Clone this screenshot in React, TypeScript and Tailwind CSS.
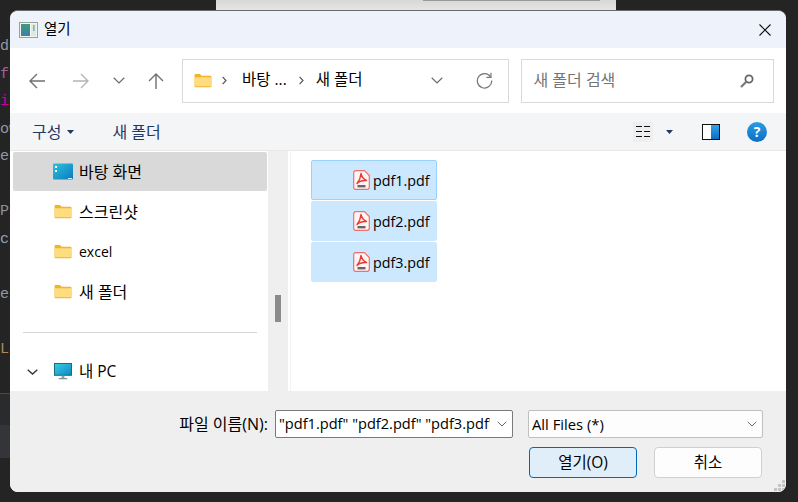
import React from "react";

const CODE: { t: string; c: string }[] = [
  { t: "de", c: "text-[#8d99a6]" },
  { t: "fi", c: "text-[#a0609a]" },
  { t: "it", c: "text-[#c800a4]" },
  { t: "ow", c: "text-[#8d99a6]" },
  { t: "et", c: "text-[#8d99a6]" },
  { t: "", c: "" },
  { t: "Pu", c: "text-[#8d8f9e]" },
  { t: "cl", c: "text-[#8fa3b8]" },
  { t: "", c: "" },
  { t: "ex", c: "text-[#8d99a6]" },
  { t: "", c: "" },
  { t: "La", c: "text-[#a98a5c]" },
];

const FONT = "font-['Open_Sans','Noto_Sans_CJK_KR',sans-serif]";

function Folder() {
  return (
    <svg width={18} height={15} viewBox="0 0 19 16" className="shrink-0">
      <path d="M0.5 2.2 C0.5 1.5 1 1 1.7 1 H6.2 L8 2.8 H17.5 C18.2 2.8 18.5 3.2 18.5 3.8 V14 C18.5 14.7 18 15.2 17.5 15.2 H1.5 C1 15.2 .5 14.7 .5 14 Z" fill="#f0b429" />
      <path d="M0.5 4.6 H18.5 V13.6 C18.5 14 18.2 14.2 17.7 14.2 H1.3 C.8 14.2 .5 14 .5 13.6 Z" fill="#fedd80" />
    </svg>
  );
}

function Desktop() {
  return (
    <svg width={20} height={17} viewBox="0 0 20 17" className="shrink-0">
      <defs>
        <linearGradient id="dsk" x1="0" y1="0" x2="1" y2="1">
          <stop offset="0" stopColor="#2cc3dc" />
          <stop offset="1" stopColor="#0d78c0" />
        </linearGradient>
      </defs>
      <rect x="0" y="0.5" width="20" height="16" rx="1" fill="url(#dsk)" />
      <rect x="2" y="3" width="2" height="2" fill="#fff" />
      <rect x="2" y="7" width="2" height="2" fill="#fff" />
      <rect x="15" y="15" width="4" height="1" fill="#cfeffa" />
    </svg>
  );
}

function Monitor() {
  return (
    <svg width={18} height={17} viewBox="0 0 19 18" className="shrink-0">
      <defs>
        <linearGradient id="mon" x1="0" y1="0" x2="1" y2="1">
          <stop offset="0" stopColor="#37d0e0" />
          <stop offset="1" stopColor="#0f86c4" />
        </linearGradient>
      </defs>
      <rect x="0.5" y="0.5" width="18" height="12.5" fill="url(#mon)" stroke="#17637f" />
      <rect x="8" y="13.5" width="3" height="2.5" fill="#8aa0ad" />
      <rect x="5" y="16" width="9" height="1.2" fill="#6f8794" />
    </svg>
  );
}

function Pdf() {
  return (
    <svg width={17} height={20} viewBox="0 0 17 20" className="shrink-0">
      <path d="M2.6 .7 H11.5 L16.3 5.5 V17 C16.3 18.4 15.5 19.3 14.2 19.3 H2.6 C1.3 19.3 .7 18.4 .7 17 V3 C.7 1.6 1.3 .7 2.6 .7 Z" fill="#fff5f4" stroke="#ee6f6b" strokeWidth="1.2" />
      <path d="M8 3.5 C8.6 6.5 10 9 13.5 10.5 C10.5 10.3 6.5 11 4 13.5 C6 11 7.7 7 8 3.5 Z" fill="none" stroke="#ea3a34" strokeWidth="1.4" strokeLinejoin="round" />
      <rect x="4.5" y="15" width="8" height="2.4" fill="#666" />
    </svg>
  );
}

function Chev({ w = 12, h = 7, color = "#6b6b6b", sw = 1.2 }: { w?: number; h?: number; color?: string; sw?: number }) {
  return (
    <svg width={w} height={h} viewBox={`0 0 ${w} ${h}`} className="shrink-0">
      <path d={`M.7 .8 L${w / 2} ${h - 1} L${w - 0.7} .8`} fill="none" stroke={color} strokeWidth={sw} />
    </svg>
  );
}

function Crumb() {
  return (
    <svg width={5} height={9} viewBox="0 0 5 9" className="shrink-0">
      <path d="M.6 .8 L4 4.5 L.6 8.2" fill="none" stroke="#555" strokeWidth="1.2" />
    </svg>
  );
}

function Arrow({ dir, color }: { dir: "l" | "r" | "u"; color: string }) {
  const d =
    dir === "l"
      ? "M16 8 H1 M8 1 L1 8 L8 15"
      : dir === "r"
        ? "M0 8 H15 M8 1 L15 8 L8 15"
        : "M8 16 V1 M1 8 L8 1 L15 8";
  return (
    <svg width={16} height={16} viewBox="0 0 16 16" className="shrink-0">
      <path d={d} fill="none" stroke={color} strokeWidth="1.4" />
    </svg>
  );
}

function Caret() {
  return (
    <svg width={7} height={4} viewBox="0 0 7 4" className="shrink-0">
      <path d="M0 0 H7 L3.5 4 Z" fill="#1f3864" />
    </svg>
  );
}

function NavItem({
  icon,
  label,
  selected,
  size = "text-[16px]",
}: {
  icon: React.ReactNode;
  label: string;
  selected?: boolean;
  size?: string;
}) {
  return (
    <div className={`flex h-[39px] w-[254px] items-center gap-[7px] rounded-[2px] pl-[41px] text-black ${size} ${selected ? "bg-[#d9d9d9]" : ""}`}>
      <span className="flex w-[18px] justify-center">{icon}</span>
      <span>{label}</span>
    </div>
  );
}

function FileItem({ name, first }: { name: string; first?: boolean }) {
  return (
    <div className={`flex h-[40px] w-[126px] items-center gap-[3px] rounded-[2px] border bg-[#cce8ff] pl-[41px] text-[14.3px] text-black ${first ? "border-[#99d1ff]" : "border-[#cce8ff]"}`}>
      <Pdf />
      <span className="pt-px">{name}</span>
    </div>
  );
}

export default function App() {
  return (
    <div className={`relative h-[502px] w-[798px] overflow-hidden bg-[#242424] ${FONT}`}>
      {/* window behind the dialog */}
      <div className="absolute left-[216px] top-0 h-[11px] w-[400px] bg-gradient-to-b from-[#d8d8d8] to-[#e6e6e6]">
        <div className="ml-[207px] h-px w-[177px] bg-[#9a9a9a]" />
      </div>
      <div className="absolute left-0 top-[393px] h-[32px] w-[10px] border-t border-[#484848] bg-[#2a2b2c]" />
      <div className="absolute left-0 top-[425px] h-[33px] w-[10px] bg-[#333538]" />

      {/* code editor text behind the dialog */}
      <div className="flex h-full w-[24px] flex-col whitespace-nowrap pt-[33px] font-['Liberation_Mono',monospace] text-[15px]">
        {CODE.map((l, i) => (
          <div key={i} className={`h-[27.5px] shrink-0 leading-[27.5px] ${l.c}`}>
            {l.t}
          </div>
        ))}
      </div>

      {/* dialog */}
      <div className="absolute left-[10px] top-[10px] flex h-[482px] w-[776px] flex-col overflow-hidden rounded-[8px] border-t border-[#6a6a6a] bg-[#efefef]">
        {/* title */}
        <div className="flex h-[37px] shrink-0 items-center bg-[#eef2fa] pl-[9px] pr-[15px]">
          <svg width={19} height={16} viewBox="0 0 19 16" className="shrink-0">
            <defs>
              <linearGradient id="ttl" x1="0" y1="0" x2="0" y2="1">
                <stop offset="0" stopColor="#3f9a7c" />
                <stop offset="1" stopColor="#3f7fa6" />
              </linearGradient>
            </defs>
            <rect x=".5" y=".5" width="18" height="15" fill="#f3f5f3" stroke="#9aa09e" />
            <rect x="2" y="2" width="9" height="12" fill="url(#ttl)" />
            <rect x="12" y="2" width="5" height="12" fill="#dfe9e4" />
            <rect x="14" y="3" width="1.6" height="6" fill="#7fb8aa" />
          </svg>
          <span className="ml-[6px] pb-px text-[14.5px] text-black">열기</span>
          <svg width={12} height={12} viewBox="0 0 12 12" className="ml-auto shrink-0">
            <path d="M0.5 .5 L11.5 11.5 M11.5 .5 L.5 11.5" stroke="#111" strokeWidth="1.1" />
          </svg>
        </div>

        {/* navigation */}
        <div className="flex h-[65px] shrink-0 items-center bg-white pl-[19px] pr-[12px]">
          <Arrow dir="l" color="#707070" />
          <span className="ml-[28px]"><Arrow dir="r" color="#b4b4b4" /></span>
          <span className="ml-[24px]"><Chev /></span>
          <span className="ml-[23px]"><Arrow dir="u" color="#707070" /></span>
          <div className="ml-[18px] flex h-[44px] w-[328px] items-center border border-[#d9d9d9] pl-[11px] pr-[15px] text-[15.5px] text-black">
            <Folder />
            <span className="ml-[10px]"><Crumb /></span>
            <span className="ml-[15px] pb-[2px]">바탕 ...</span>
            <span className="ml-[12px]"><Crumb /></span>
            <span className="ml-[12px] pb-[2px]">새 폴더</span>
            <span className="ml-auto"><Chev /></span>
            <svg width={17} height={17} viewBox="0 0 17 17" className="ml-[33px] shrink-0">
              <path d="M14.6 5 A7.2 7.2 0 1 0 15.7 8.5" fill="none" stroke="#777" strokeWidth="1.2" />
              <path d="M15 .8 V5.4 H10.4" fill="none" stroke="#777" strokeWidth="1.2" />
            </svg>
          </div>
          <div className="ml-[12px] flex h-[44px] w-[253px] items-center justify-between border border-[#d9d9d9] pl-[11px] pr-[19px] text-[16px] text-[#757575]">
            <span className="pb-[2px]">새 폴더 검색</span>
            <svg width={14} height={14} viewBox="0 0 14 14" className="shrink-0">
              <circle cx="9" cy="5" r="3.6" fill="none" stroke="#666" strokeWidth="1.8" />
              <path d="M6.3 7.8 L1 13" stroke="#777" strokeWidth="2.2" />
            </svg>
          </div>
        </div>

        {/* toolbar */}
        <div className="flex h-[38px] shrink-0 items-center border-b border-[#e8e8e8] bg-[#f4f5f7] pl-[22px] pr-[19px] text-[16px] text-[#1f3864]">
          <span>구성</span>
          <span className="ml-[6px]"><Caret /></span>
          <span className="ml-[38px]">새 폴더</span>
          <div className="ml-auto flex h-[20px] w-[20px] items-center justify-center bg-[#efefef]">
            <svg width={14} height={13} viewBox="0 0 14 13">
              <path d="M0 1.5 H6 M8 1.5 H14 M0 6.5 H6 M8 6.5 H14 M0 11.5 H6 M8 11.5 H14" stroke="#111" strokeWidth="1" />
            </svg>
          </div>
          <span className="ml-[13px]"><Caret /></span>
          <svg width={18} height={16} viewBox="0 0 18 16" className="ml-[29px] shrink-0">
            <defs>
              <linearGradient id="pane" x1="0" y1="0" x2="0" y2="1">
                <stop offset="0" stopColor="#35a3e8" />
                <stop offset="1" stopColor="#0a6fc4" />
              </linearGradient>
            </defs>
            <rect x=".5" y=".5" width="17" height="15" fill="#fff" stroke="#111" />
            <rect x="9" y="1" width="8" height="14" fill="url(#pane)" />
          </svg>
          <div className="ml-[27px] flex h-[20px] w-[20px] items-center justify-center rounded-full bg-gradient-to-b from-[#2a9be6] to-[#0b6fc2] text-[14px] font-bold leading-none text-white">
            ?
          </div>
        </div>

        {/* main area */}
        <div className="flex h-[240px] shrink-0">
          <div className="flex h-full w-[258px] shrink-0 flex-col gap-px overflow-hidden bg-white pl-[3px] pt-px">
            <NavItem selected icon={<Desktop />} label="바탕 화면" />
            <NavItem icon={<Folder />} label="스크린샷" />
            <NavItem icon={<Folder />} label="excel" size="text-[14px]" />
            <NavItem icon={<Folder />} label="새 폴더" />
            <div className="ml-[10px] mt-[20px] h-px w-[234px] shrink-0 bg-[#d6d6d6]" />
            <div className="relative mt-[18px]">
              <NavItem icon={<Monitor />} label="내 PC" size="text-[15.5px]" />
              <span className="absolute left-[14px] top-[17px]"><Chev w={11} h={6} color="#333" sw={1.4} /></span>
            </div>
          </div>
          <div className="flex h-full w-[20px] shrink-0 flex-col bg-[#efefef] pl-[7px] pt-[144px]">
            <div className="h-[27px] w-[6px] bg-[#8b8b8b]" />
          </div>
          <div className="h-full flex-1 bg-white pl-[2px]">
            <div className="flex h-full flex-col gap-px border-l border-[#f4f4f4] pl-[20px] pt-[9px]">
              <FileItem first name="pdf1.pdf" />
              <FileItem name="pdf2.pdf" />
              <FileItem name="pdf3.pdf" />
            </div>
          </div>
        </div>

        {/* footer */}
        <div className="relative flex flex-1 flex-col bg-[#efefef] pt-[19px] text-black">
          <div className="flex items-center">
            <span className="w-[258px] shrink-0 text-right text-[16px]">파일 이름(N):</span>
            <div className="ml-[7px] flex h-[28px] w-[238px] shrink-0 items-center justify-between rounded-[2px] border border-[#7a7a7a] bg-white pl-[3px] pr-[5px] text-[14.6px]">
              <span className="w-[211px] overflow-hidden whitespace-nowrap">"pdf1.pdf" "pdf2.pdf" "pdf3.pdf"</span>
              <Chev w={10} h={6} color="#666" sw={1} />
            </div>
            <div className="ml-[15px] flex h-[28px] w-[235px] shrink-0 items-center justify-between rounded-[2px] border border-[#c0c0c0] bg-[#fdfdfd] pl-[3px] pr-[5px] text-[14.8px]">
              <span>All Files (*)</span>
              <Chev w={10} h={6} color="#666" sw={1} />
            </div>
          </div>
          <div className="ml-[519px] mt-[9px] flex gap-[17px]">
            <button className="h-[31px] w-[108px] rounded-[4px] border border-[#0067c0] bg-[#e0eef9] text-[15.5px] text-black">열기(O)</button>
            <button className="h-[31px] w-[108px] rounded-[4px] border border-[#d0d0d0] bg-[#fdfdfd] text-[15.5px] text-black">취소</button>
          </div>
          <svg width={11} height={11} viewBox="0 0 11 11" className="absolute bottom-[1px] right-[1px]">
            <path d="M8 0h3v3H8z M4 4h3v3H4z M8 4h3v3H8z M0 8h3v3H0z M4 8h3v3H4z M8 8h3v3H8z" fill="#c4c4c4" />
          </svg>
        </div>
      </div>
    </div>
  );
}
